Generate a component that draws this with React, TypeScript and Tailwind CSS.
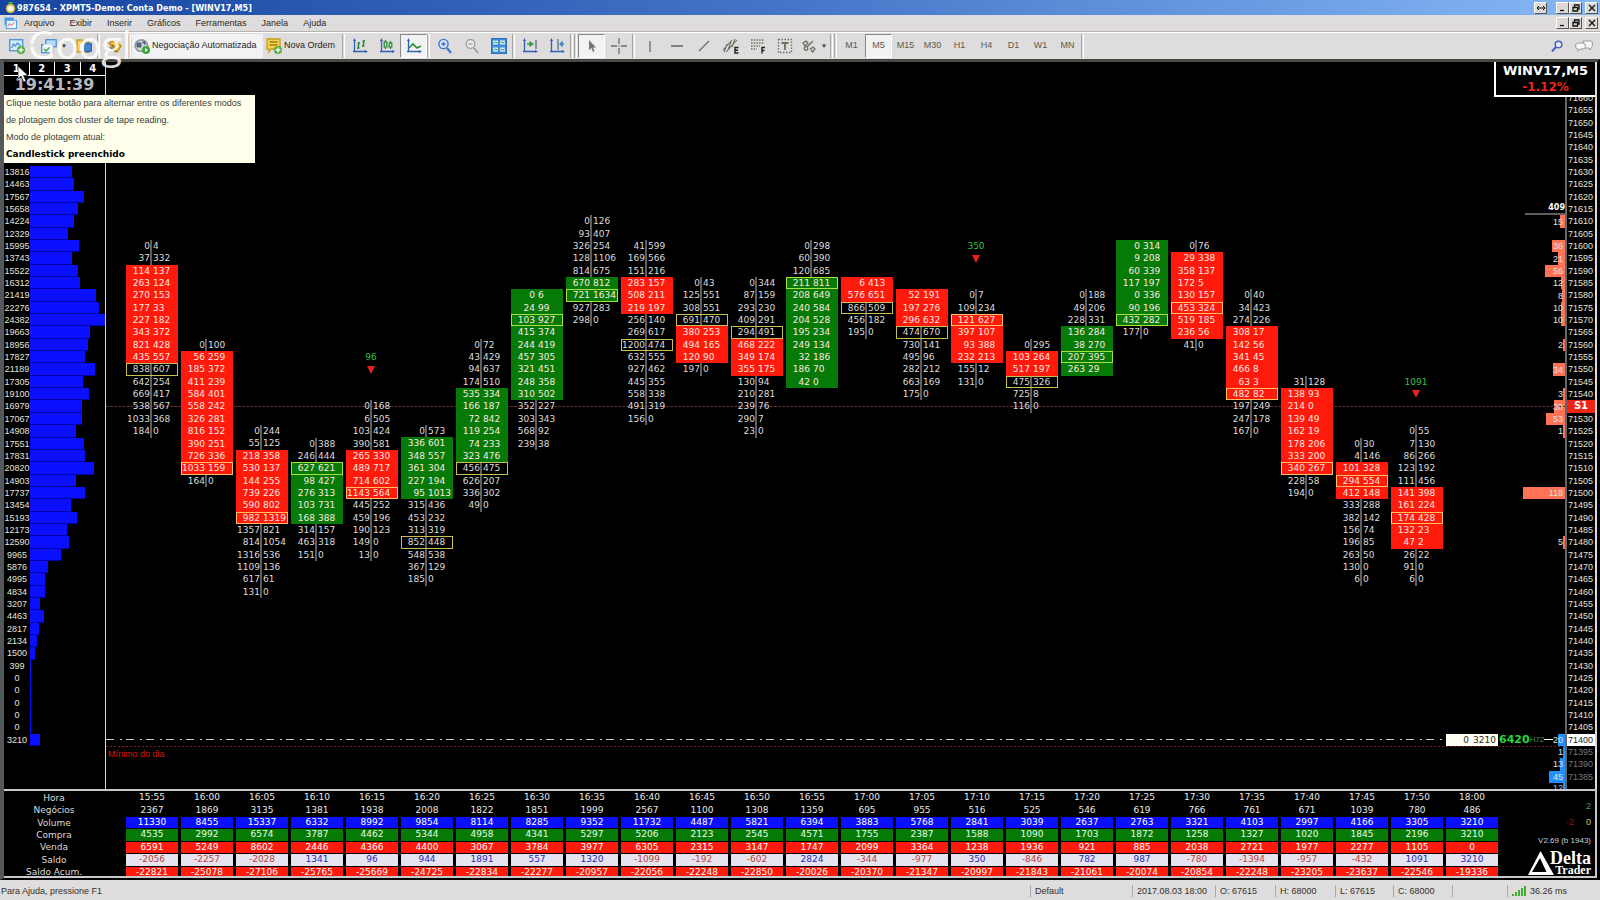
import React from 'react';

type Pair = [number, number];

interface Cluster {
  time: string;
  top?: number;
  cells: Pair[];
  body?: [number, number];
  poc?: number;
  up?: boolean;
  signal?: { value: number; price: number };
  stats: number[];
}

const TOP_PRICE = 71660;
const STEP = 5;
const ROWS = 56;

const rowOf = (price: number) => (TOP_PRICE - price) / STEP + 1;

const GRID = 'grid min-h-0 flex-1 grid-rows-[repeat(56,minmax(0,1fr))]';

// stats: negócios, volume, compra, venda, saldo, saldo acumulado
const clusters: Cluster[] = [
  { time: '15:55', top: 71600, body: [2, 9], poc: 10, cells: [[0, 4], [37, 332], [114, 137], [263, 124], [270, 153], [177, 33], [227, 182], [343, 372], [821, 428], [435, 557], [838, 607], [642, 254], [669, 417], [538, 567], [1033, 368], [184, 0]], stats: [2367, 11330, 4535, 6591, -2056, -22821] },
  { time: '16:00', top: 71560, body: [1, 10], poc: 10, cells: [[0, 100], [56, 259], [185, 372], [411, 239], [584, 401], [558, 242], [326, 281], [816, 152], [390, 251], [726, 336], [1033, 159], [164, 0]], stats: [1869, 8455, 2992, 5249, -2257, -25078] },
  { time: '16:05', top: 71525, body: [2, 7], poc: 7, cells: [[0, 244], [55, 125], [218, 358], [530, 137], [144, 255], [739, 226], [590, 802], [982, 1319], [1357, 821], [814, 1054], [1316, 536], [1109, 136], [617, 61], [131, 0]], stats: [3135, 15337, 6574, 8602, -2028, -27106] },
  { time: '16:10', top: 71520, body: [2, 6], poc: 2, up: true, cells: [[0, 388], [246, 444], [627, 621], [98, 427], [276, 313], [103, 731], [168, 388], [314, 157], [463, 318], [151, 0]], stats: [1381, 6332, 3787, 2446, 1341, -25765] },
  { time: '16:15', top: 71535, body: [4, 7], poc: 7, signal: { value: 96, price: 71555 }, cells: [[0, 168], [6, 505], [103, 424], [390, 581], [265, 330], [489, 717], [714, 602], [1143, 564], [445, 252], [459, 196], [190, 123], [149, 0], [13, 0]], stats: [1938, 8992, 4462, 4366, 96, -25669] },
  { time: '16:20', top: 71525, body: [1, 5], poc: 9, up: true, cells: [[0, 573], [336, 601], [348, 557], [361, 304], [227, 194], [95, 1013], [315, 436], [453, 232], [313, 319], [852, 448], [548, 538], [367, 129], [185, 0]], stats: [2008, 9854, 5344, 4400, 944, -24725] },
  { time: '16:25', top: 71560, body: [4, 9], poc: 10, up: true, cells: [[0, 72], [43, 429], [94, 637], [174, 510], [535, 334], [166, 187], [72, 842], [119, 254], [74, 233], [323, 476], [456, 475], [626, 207], [336, 302], [49, 0]], stats: [1822, 8114, 4958, 3067, 1891, -22834] },
  { time: '16:30', top: 71580, body: [0, 8], poc: 2, up: true, cells: [[0, 6], [24, 99], [103, 927], [415, 374], [244, 419], [457, 305], [321, 451], [248, 358], [310, 502], [352, 227], [303, 343], [568, 92], [239, 38]], stats: [1851, 8285, 4341, 3784, 557, -22277] },
  { time: '16:35', top: 71610, body: [5, 6], poc: 6, up: true, cells: [[0, 126], [93, 407], [326, 254], [128, 1106], [814, 675], [670, 812], [721, 1634], [927, 283], [298, 0]], stats: [1999, 9352, 5297, 3977, 1320, -20957] },
  { time: '16:40', top: 71600, body: [3, 5], poc: 8, cells: [[41, 599], [169, 566], [151, 216], [283, 157], [508, 211], [219, 197], [256, 140], [269, 617], [1200, 474], [632, 555], [927, 462], [445, 355], [558, 338], [491, 319], [156, 0]], stats: [2567, 11732, 5206, 6305, -1099, -22056] },
  { time: '16:45', top: 71585, body: [4, 6], poc: 3, cells: [[0, 43], [125, 551], [308, 551], [691, 470], [380, 253], [494, 165], [120, 90], [197, 0]], stats: [1100, 4487, 2123, 2315, -192, -22248] },
  { time: '16:50', top: 71585, body: [5, 7], poc: 4, cells: [[0, 344], [87, 159], [293, 230], [409, 291], [294, 491], [468, 222], [349, 174], [355, 175], [130, 94], [210, 281], [239, 76], [290, 7], [23, 0]], stats: [1308, 5821, 2545, 3147, -602, -22850] },
  { time: '16:55', top: 71600, body: [3, 11], poc: 3, up: true, cells: [[0, 298], [60, 390], [120, 685], [211, 811], [208, 649], [240, 584], [204, 528], [195, 234], [249, 134], [32, 186], [186, 70], [42, 0]], stats: [1359, 6394, 4571, 1747, 2824, -20026] },
  { time: '17:00', top: 71585, body: [0, 1], poc: 2, cells: [[6, 413], [576, 651], [866, 509], [456, 182], [195, 0]], stats: [695, 3883, 1755, 2099, -344, -20370] },
  { time: '17:05', top: 71580, body: [0, 2], poc: 3, cells: [[52, 191], [197, 276], [296, 632], [474, 670], [730, 141], [495, 96], [282, 212], [663, 169], [175, 0]], stats: [955, 5768, 2387, 3364, -977, -21347] },
  { time: '17:10', top: 71580, body: [2, 5], poc: 2, signal: { value: 350, price: 71600 }, cells: [[0, 7], [109, 234], [121, 627], [397, 107], [93, 388], [232, 213], [155, 12], [131, 0]], stats: [516, 2841, 1588, 1238, 350, -20997] },
  { time: '17:15', top: 71560, body: [1, 2], poc: 3, cells: [[0, 295], [103, 264], [517, 197], [475, 326], [725, 8], [116, 0]], stats: [525, 3039, 1090, 1936, -846, -21843] },
  { time: '17:20', top: 71580, body: [3, 6], poc: 5, up: true, cells: [[0, 188], [49, 206], [228, 331], [136, 284], [38, 270], [207, 395], [263, 29]], stats: [546, 2637, 1703, 921, 782, -21061] },
  { time: '17:25', top: 71600, body: [0, 6], poc: 6, up: true, cells: [[0, 314], [9, 208], [60, 339], [117, 197], [0, 336], [90, 196], [432, 282], [177, 0]], stats: [619, 2763, 1872, 885, 987, -20074] },
  { time: '17:30', top: 71600, body: [1, 7], poc: 5, cells: [[0, 76], [29, 338], [358, 137], [172, 5], [130, 157], [453, 324], [519, 185], [236, 56], [41, 0]], stats: [766, 3321, 1258, 2038, -780, -20854] },
  { time: '17:35', top: 71580, body: [3, 8], poc: 8, cells: [[0, 40], [34, 423], [274, 226], [308, 17], [142, 56], [341, 45], [466, 8], [63, 3], [482, 82], [197, 249], [247, 178], [167, 0]], stats: [761, 4103, 1327, 2721, -1394, -22248] },
  { time: '17:40', top: 71545, body: [1, 7], poc: 7, cells: [[31, 128], [138, 93], [214, 0], [139, 49], [162, 19], [178, 206], [333, 200], [340, 267], [228, 58], [194, 0]], stats: [671, 2997, 1020, 1977, -957, -23205] },
  { time: '17:45', top: 71520, body: [2, 4], poc: 3, cells: [[0, 30], [4, 146], [101, 328], [294, 554], [412, 148], [333, 288], [382, 142], [156, 74], [196, 85], [263, 50], [130, 0], [6, 0]], stats: [1039, 4166, 1845, 2277, -432, -23637] },
  { time: '17:50', top: 71525, body: [5, 9], poc: 7, signal: { value: 1091, price: 71545 }, cells: [[0, 55], [7, 130], [86, 266], [123, 192], [111, 456], [141, 398], [161, 224], [174, 428], [132, 23], [47, 2], [26, 22], [91, 0], [6, 0]], stats: [780, 3305, 2196, 1105, 1091, -22546] },
  { time: '18:00', cells: [], stats: [486, 3210, 3210, 0, 3210, -19336] },
];

const PROFILE_TOP = 71630;
const profile = [
  13816, 14463, 17567, 15658, 14224, 12329, 15995, 13743, 15522, 16312, 21419, 22276, 24382, 19663, 18956, 17827,
  21189, 17305, 19100, 16979, 17067, 14908, 17551, 17831, 20820, 14903, 17737, 13454, 15193, 12173, 12590, 9965,
  5876, 4995, 4834, 3207, 4463, 2817, 2134, 1500, 399, 0, 0, 0, 0, 0, 3210,
];

const book: { price: number; qty: number; bid?: boolean }[] = [
  { price: 71610, qty: 15 },
  { price: 71600, qty: 36 },
  { price: 71595, qty: 21 },
  { price: 71590, qty: 56 },
  { price: 71585, qty: 12 },
  { price: 71580, qty: 8 },
  { price: 71575, qty: 10 },
  { price: 71570, qty: 10 },
  { price: 71560, qty: 2 },
  { price: 71550, qty: 34 },
  { price: 71540, qty: 3 },
  { price: 71535, qty: 30 },
  { price: 71530, qty: 53 },
  { price: 71525, qty: 1 },
  { price: 71500, qty: 118 },
  { price: 71480, qty: 5 },
  { price: 71400, qty: 20, bid: true },
  { price: 71395, qty: 1, bid: true },
  { price: 71390, qty: 13, bid: true },
  { price: 71385, qty: 45, bid: true },
];

const statRows = [
  { label: 'Negócios', cls: 'text-[#e8e8e8]' },
  { label: 'Volume', cls: 'bg-[#0a10ff] text-white' },
  { label: 'Compra', cls: 'bg-[#067a06] text-[#e6ffe6]' },
  { label: 'Venda', cls: 'bg-[#ff1a0c] text-white' },
  { label: 'Saldo', cls: 'bg-[#e6e4ee]' },
  { label: 'Saldo Acum.', cls: 'bg-[#ff1a0c] text-white' },
];

const menus = ['Arquivo', 'Exibir', 'Inserir', 'Gráficos', 'Ferramentas', 'Janela', 'Ajuda'];
const timeframes = ['M1', 'M5', 'M15', 'M30', 'H1', 'H4', 'D1', 'W1', 'MN'];

const Svg: React.FC<{ children: React.ReactNode }> = ({ children }) => (
  <svg className="h-4 w-4 shrink-0" viewBox="0 0 16 16" fill="none" stroke="#6d6d60" strokeWidth="1.3">
    {children}
  </svg>
);

const Axes = () => (
  <>
    <path d="M2.5 2v12M1 13.5h13" stroke="#2f62b5" />
    <path d="M2.5 0L1 3h3zM16 13.5L13 12v3z" fill="#2f62b5" stroke="none" />
  </>
);

const icons = {
  newChart: (
    <Svg>
      <rect x="0.7" y="1.7" width="13" height="11" fill="#d5ecfa" stroke="#4a93d4" />
      <path d="M2.5 10l2-4 2 2 2-3 3 3" stroke="#4a93d4" />
      <circle cx="12" cy="12" r="4" fill="#4fae3c" stroke="none" />
      <path d="M12 9.5v5M9.5 12h5" stroke="#fff" strokeWidth="1.5" />
    </Svg>
  ),
  profiles: (
    <Svg>
      <rect x="4.7" y="1.7" width="10.5" height="7" fill="#b6dcf6" stroke="#4a93d4" />
      <rect x="0.7" y="6.7" width="11" height="8" fill="#e6f4fc" stroke="#4a93d4" />
      <path d="M3 11l2 2 4-4" stroke="#3b9c3a" />
    </Svg>
  ),
  market: (
    <Svg>
      <path d="M1 2h5l1 2h6v10H1z" fill="#f4d469" stroke="#c89a2a" />
      <rect x="8.5" y="5.5" width="7" height="8" rx="1" fill="#3f86d8" stroke="#2767b4" />
      <path d="M5 6v6" stroke="#fff" strokeWidth="2" />
    </Svg>
  ),
  tester: (
    <Svg>
      <path d="M2 5l6-3 6 6-4 6z" fill="#f0be3a" stroke="#b88412" />
      <path d="M5 7l5 4M3 9l6 5" stroke="#8a6410" />
    </Svg>
  ),
  robot: (
    <Svg>
      <path d="M1 9Q1 3 6 2h3q4 1 5 6l-3 5H4z" fill="#d4d6da" stroke="#8c8f96" />
      <path d="M3 5h4v4H3zM8 4h3v3" fill="#5a6a8c" stroke="#4a5a7c" strokeWidth="1" />
      <circle cx="12" cy="12" r="4" fill="#3da53a" stroke="none" />
      <path d="M11 10l3 2-3 2z" fill="#fff" stroke="none" />
    </Svg>
  ),
  order: (
    <Svg>
      <path d="M1 1h13v10H5l-2 3v-3H1z" fill="#f7d24f" stroke="#c79c22" />
      <path d="M3.5 4h8M3.5 7h8" stroke="#a27c14" />
      <circle cx="12" cy="12" r="4" fill="#4fae3c" stroke="none" />
      <path d="M12 9.5v5M9.5 12h5" stroke="#fff" strokeWidth="1.5" />
    </Svg>
  ),
  bars: (
    <Svg>
      <Axes />
      <path d="M6.5 4v7M5 10h1.5M6.5 5H8M11.5 2v7M10 8h1.5M11.5 3H13" stroke="#2f8c3a" strokeWidth="1.6" />
    </Svg>
  ),
  candles: (
    <Svg>
      <Axes />
      <path d="M6.5 2v9M11.5 3v8" stroke="#2f8c3a" />
      <rect x="5.2" y="4" width="2.6" height="5" fill="#e4f4e0" stroke="#2f8c3a" />
      <rect x="10.2" y="5" width="2.6" height="4" fill="#e4f4e0" stroke="#2f8c3a" />
    </Svg>
  ),
  line: (
    <Svg>
      <Axes />
      <path d="M3 10l4-4 4 4 4-2" stroke="#2f8c3a" strokeWidth="1.6" />
    </Svg>
  ),
  zoomIn: (
    <Svg>
      <circle cx="6.5" cy="6" r="4.6" fill="#cfe2fa" stroke="#3e74cf" strokeWidth="1.4" />
      <path d="M4.5 6h4M6.5 4v4" stroke="#3e74cf" />
      <path d="M10 10l4 5" stroke="#3e74cf" strokeWidth="2.2" />
    </Svg>
  ),
  zoomOut: (
    <Svg>
      <circle cx="6.5" cy="6" r="4.3" fill="#ececec" stroke="#9a9a9a" />
      <path d="M4.5 6h4" stroke="#9a9a9a" />
      <path d="M10 10l4 5" stroke="#9a9a9a" strokeWidth="1.8" />
    </Svg>
  ),
  tile: (
    <Svg>
      <rect x="0.5" y="0.5" width="15" height="15" fill="#3f8fd8" stroke="#2a70b8" />
      <path d="M2 2.5h5v4H2zM9 2.5h5v4H9zM2 9.5h5v4H2zM9 9.5h5v4H9z" fill="#d5ecfa" stroke="none" />
      <path d="M2.5 5l2-1 2 1M9.5 4l2 1 2-1M2.5 12l2-1 2 1M9.5 11l2 1 2-1" stroke="#3b9c3a" strokeWidth="1" />
    </Svg>
  ),
  scroll: (
    <Svg>
      <Axes />
      <path d="M14 2v9" stroke="#5a6a8c" />
      <path d="M5 6h4M8 4l3 2-3 2z" stroke="#3b9c3a" fill="#3b9c3a" />
    </Svg>
  ),
  shift: (
    <Svg>
      <Axes />
      <path d="M9 1v11" stroke="#5a6a8c" />
      <path d="M15 6h-3M13 4l-2 2 2 2z" stroke="#3e84cf" fill="#3e84cf" />
    </Svg>
  ),
  cursor: (
    <Svg>
      <path d="M5 2v10l2.5-2 1.5 4 1.5-.6L9 9.5h3z" fill="#77776c" stroke="none" />
    </Svg>
  ),
  cross: (
    <Svg>
      <path d="M8 0v6M8 10v6M0 8h6M10 8h6M7.5 8h1" />
    </Svg>
  ),
  vline: (
    <Svg>
      <path d="M8 3v11" />
    </Svg>
  ),
  hline: (
    <Svg>
      <path d="M2 8h12" strokeWidth="1.6" />
    </Svg>
  ),
  trend: (
    <Svg>
      <path d="M3 13L13 3" />
    </Svg>
  ),
  channel: (
    <Svg>
      <path d="M0 12L9 2M3 14L14 2M1 14l3-8M5 12l3-8M9 9l3-8" strokeWidth="1.1" />
      <path d="M15.5 9.5H12V15h3.5M12 12.3h3" stroke="#222" strokeWidth="1.4" />
    </Svg>
  ),
  fibo: (
    <Svg>
      <path d="M1 2h13M1 5h13M1 8h9M1 11h6" strokeDasharray="1.5 1.2" />
      <path d="M15 9.5h-3v6M12 12.5h2.5" stroke="#222" strokeWidth="1.4" />
    </Svg>
  ),
  text: (
    <Svg>
      <rect x="1.5" y="1.5" width="13" height="13" strokeDasharray="1.5 1.5" />
      <path d="M4.5 5h7M8 5v7" strokeWidth="1.8" />
    </Svg>
  ),
  shapes: (
    <Svg>
      <path d="M2 5l3-2 2 2-3 3zM6 9l6-6" />
      <circle cx="5" cy="10.5" r="1.8" />
      <path d="M9.5 11l2.5-2 2 2-2.5 3z" />
    </Svg>
  ),
};

const Caret = () => <span className="text-[6px] text-[#333]">▼</span>;

const Sep = () => <div className="mr-px h-6 w-[3px] shrink-0 border-l border-r border-l-[#a8a6a4] border-r-white" />;

interface ToolProps {
  icon: keyof typeof icons;
  label: string;
  caret?: boolean;
  pressed?: boolean;
}

const Tool: React.FC<ToolProps> = ({ icon, label, caret, pressed }) => (
  <button
    aria-label={label}
    className={`flex h-6 shrink-0 items-center justify-center ${caret ? 'w-8 gap-1' : 'w-[27px]'} ${pressed ? 'border border-t-[#8a8886] border-l-[#8a8886] border-r-white border-b-white bg-[#f2f1f4]' : ''}`}
  >
    {icons[icon]}
    {caret && <Caret />}
  </button>
);

const WinButton: React.FC<{ label: string; children: React.ReactNode }> = ({ label, children }) => (
  <button
    aria-label={label}
    className="flex h-3 w-[13px] items-center justify-center border border-t-white border-l-white border-r-[#555] border-b-[#555] bg-[#dcd9d4]"
  >
    <svg className="h-2 w-2" viewBox="0 0 8 8" fill="none" stroke="#111" strokeWidth="1.3">
      {children}
    </svg>
  </button>
);

const WinControls = () => (
  <div className="flex">
    <WinButton label="Minimizar">
      <path d="M1 6.5h4" />
    </WinButton>
    <WinButton label="Restaurar">
      <path d="M2.5 3V1H7v4H5.5M1 3.5h4.5V7H1z" />
    </WinButton>
    <div className="ml-[3px]">
      <WinButton label="Fechar">
        <path d="M1 1l6 6M7 1L1 7" />
      </WinButton>
    </div>
  </div>
);

const TitleBar = () => (
  <header className="flex h-[15px] shrink-0 items-center bg-linear-to-r from-[#1545a0] via-[#4676c8] to-[#86b8f6] pr-[2px] pl-1">
    <svg className="h-[13px] w-[13px]" viewBox="0 0 14 14">
      <circle cx="7" cy="8" r="5" fill="#e9c64a" />
      <circle cx="7" cy="8" r="3" fill="#f6f6f0" />
      <path d="M4 1l3 3 3-3z" fill="#4fae3c" />
    </svg>
    <h1 className="flex-1 font-['DejaVu_Sans_Condensed','DejaVu_Sans',sans-serif] text-[9px] leading-3 font-bold text-white">
      987654 - XPMT5-Demo: Conta Demo - [WINV17,M5]
    </h1>
    <div className="mr-[9px]">
      <WinButton label="Expandir">
        <path d="M0 4h8M2 2L0 4l2 2M6 2l2 2-2 2" strokeWidth="1" />
      </WinButton>
    </div>
    <WinControls />
  </header>
);

const MenuBar = () => (
  <nav className="flex h-[17px] shrink-0 items-center border-b border-[#b5b2b0] bg-[#dedcdc] pr-[2px] pl-1">
    <svg className="mr-[7px] h-[13px] w-[13px]" viewBox="0 0 14 14">
      <rect x="0.5" y="0.5" width="10" height="8" fill="#4c9be6" />
      <rect x="2.5" y="3.5" width="11" height="9" fill="#eaf5fd" stroke="#4c9be6" />
      <path d="M4 10l2-3 2 2 3-3" fill="none" stroke="#d6504a" />
    </svg>
    <div className="flex flex-1 gap-[15px]">
      {menus.map(m => (
        <button key={m} className="text-[9px] leading-3 text-[#2c2a20]">
          {m}
        </button>
      ))}
    </div>
    <WinControls />
  </nav>
);

const Toolbar = () => (
  <div className="flex h-[27px] shrink-0 items-center border-t border-t-white bg-[#dedcdc] pl-[6px]">
    <Tool icon="newChart" label="Novo gráfico" caret />
    <Tool icon="profiles" label="Perfis" caret />
    <Tool icon="market" label="Observação de mercado" />
    <Sep />
    <Tool icon="tester" label="Testador" />
    <Sep />
    <button className="flex h-6 w-[131px] shrink-0 items-center gap-[2px] bg-[#f2f1f4] pl-[2px] text-[9px] text-[#26241c]">
      {icons.robot}
      Negociação Automatizada
    </button>
    <button className="flex h-6 w-[79px] shrink-0 items-center gap-[2px] pl-[3px] text-[9px] text-[#26241c]">
      {icons.order}
      Nova Ordem
    </button>
    <Sep />
    <Tool icon="bars" label="Barras" />
    <Tool icon="candles" label="Velas" />
    <Tool icon="line" label="Linha" pressed />
    <Sep />
    <Tool icon="zoomIn" label="Aproximar" />
    <Tool icon="zoomOut" label="Afastar" />
    <Tool icon="tile" label="Organizar janelas" />
    <Sep />
    <Tool icon="scroll" label="Rolagem automática" />
    <Tool icon="shift" label="Deslocar gráfico" />
    <Sep />
    <Sep />
    <Tool icon="cursor" label="Cursor" pressed />
    <Tool icon="cross" label="Mira" />
    <Sep />
    <Tool icon="vline" label="Linha vertical" />
    <Tool icon="hline" label="Linha horizontal" />
    <Tool icon="trend" label="Linha de tendência" />
    <Tool icon="channel" label="Canal equidistante" />
    <Tool icon="fibo" label="Fibonacci" />
    <Tool icon="text" label="Texto" />
    <Tool icon="shapes" label="Formas" caret />
    <Sep />
    <Sep />
    {timeframes.map(tf => (
      <button
        key={tf}
        className={`h-6 w-[27px] shrink-0 text-center text-[9px] text-[#5a584c] ${tf === 'M5' ? 'border border-t-[#8a8886] border-l-[#8a8886] border-r-white border-b-white bg-[#f2f1f4]' : ''}`}
      >
        {tf}
      </button>
    ))}
    <Sep />
    <div className="ml-auto flex items-center gap-3 pr-[7px]">
      <button aria-label="Pesquisar">
        <svg className="h-3 w-3" viewBox="0 0 12 12" fill="none" stroke="#4a62c8">
          <circle cx="7.5" cy="4.5" r="3.3" strokeWidth="1.5" fill="#e4eafc" />
          <path d="M5 7L1 11.5" strokeWidth="2" />
        </svg>
      </button>
      <button aria-label="Mensagens">
        <svg className="h-3 w-[18px]" viewBox="0 0 18 12" fill="#f7f7f7" stroke="#9c9a98">
          <path d="M8 1h8q1.5 0 1.5 3T16 8l-1 2-1-2H9z" />
          <path d="M3 3h5q2.5 0 2.5 3T8 9H5l-2 2.5V9Q.5 9 .5 6T3 3z" />
        </svg>
      </button>
    </div>
  </div>
);

const PROFILE_MAX = Math.max(...profile);

const VolumeProfile = () => (
  <aside className="flex w-[102px] shrink-0 flex-col border-r border-[#d8d8e4]">
    <div className="flex h-[14px] shrink-0 divide-x divide-white border-b border-white font-['DejaVu_Sans',sans-serif] text-[10px] leading-[13px] font-bold text-white">
      {[1, 2, 3, 4].map(n => (
        <button key={n} className="flex-1">
          {n}
        </button>
      ))}
    </div>
    <div className="h-4 shrink-0 text-center font-['DejaVu_Sans',sans-serif] text-base leading-[18px] font-bold text-[#b9b9bd]">
      19:41:39
    </div>
    <div className={GRID}>
      {profile.map((v, i) => (
        <div
          key={i}
          className="flex items-stretch"
          style={{ gridRow: rowOf(PROFILE_TOP - i * STEP) }}
        >
          <span className="w-[26px] text-center text-[9px] leading-3 text-[#e4e4d8]">
            {v}
          </span>
          <div className="flex-1">
            <div
              className="h-full min-w-px border-b border-[#0005a0] bg-[#0a10ff]"
              style={{ width: `${(v / PROFILE_MAX) * 100}%` }}
            />
          </div>
        </div>
      ))}
    </div>
    <div className="h-[6px] shrink-0" />
  </aside>
);

const ClusterColumn: React.FC<{ data: Cluster }> = ({ data }) => {
  const { top = 0, cells, body = [-1, -1], poc, up, signal } = data;
  const first = rowOf(top);

  if (!cells.length) {
    return (
      <div className={`${GRID} pr-[3px]`}>
        <div className="flex justify-end gap-1 bg-[#fffff4] pr-[2px] leading-3 text-[#2a2820]" style={{ gridRow: rowOf(71400) }}>
          <span>0</span>
          <span>3210</span>
        </div>
      </div>
    );
  }

  return (
    <div className={`${GRID} pr-[3px]`}>
      {signal && (
        <>
          <span className="col-start-1 pr-[2px] text-center leading-3 text-[#2fc040]" style={{ gridRow: rowOf(signal.price) }}>
            {signal.value}
          </span>
          <svg className="col-start-1 mr-[2px] h-2 w-2 self-center justify-self-center" viewBox="0 0 8 8" style={{ gridRow: rowOf(signal.price) + 1 }}>
            <path d="M0 0h8L4 8z" fill="#e8201c" />
          </svg>
        </>
      )}
      <div
        className="col-start-1 mr-[2px] w-[2px] justify-self-center bg-[#5e5e62]"
        style={{ gridRow: `${first} / span ${cells.length}` }}
      />
      <div
        className={`col-start-1 ${up ? 'bg-[#067a06]' : 'bg-[#ff1a0c]'}`}
        style={{ gridRow: `${first + body[0]} / ${first + body[1] + 1}` }}
      />
      {cells.map(([sell, buy], i) => {
        const inBody = i >= body[0] && i <= body[1];
        const pocColor = inBody ? (up ? 'border-[#a8e03c]' : 'border-[#ffc060]') : 'border-[#c8c050]';
        return (
          <div
            key={i}
            className={`col-start-1 flex border pr-[2px] leading-[10px] ${i === poc ? pocColor : 'border-transparent'} ${inBody ? 'text-[#ffe8e0]' : 'text-[#dcdcdc]'}`}
            style={{ gridRow: first + i }}
          >
            <span className="flex w-1/2 justify-end pr-[1px]">{sell}</span>
            <span className="w-1/2 pl-[2px]">{buy}</span>
          </div>
        );
      })}
    </div>
  );
};

const PriceLines = () => (
  <div className="absolute inset-0 flex flex-col">
    <div className="h-[30px] shrink-0" />
    <div className={GRID}>
      <svg className="h-px w-full self-center" style={{ gridRow: rowOf(71535) }}>
        <line x1="0" y1="0.5" x2="100%" y2="0.5" stroke="#5c3230" strokeDasharray="3 1" />
      </svg>
      <svg className="h-px w-full self-center pr-[120px]" style={{ gridRow: rowOf(71400) }}>
        <line x1="0" y1="0.5" x2="100%" y2="0.5" stroke="#c8c8c8" strokeDasharray="8 6 2 4" />
      </svg>
      <div className="flex flex-col" style={{ gridRow: `${rowOf(71395)} / span 2` }}>
        <svg className="h-px w-full shrink-0">
          <line x1="0" y1="0.5" x2="100%" y2="0.5" stroke="#7a1f1c" strokeDasharray="2 2" />
        </svg>
        <span className="pl-[2px] text-[9px] leading-[14px] text-[#d8160e]">Mínimo do dia</span>
      </div>
    </div>
    <div className="h-[6px] shrink-0" />
  </div>
);

const OrderBook = () => (
  <div className="flex w-16 shrink-0 flex-col">
    <div className="h-[30px] shrink-0" />
    <div className={`${GRID} text-[9px] text-[#e0e0e0]`}>
      <div className="flex flex-col items-end" style={{ gridRow: rowOf(71615) }}>
        <span className="font-['DejaVu_Sans',sans-serif] text-[8px] leading-[10px] font-bold text-white">409</span>
        <div className="h-[2px] w-10 bg-[#5e5e5e]" />
      </div>
      {book.map(({ price, qty, bid }) => (
        <div key={price} className="col-start-1 grid" style={{ gridRow: rowOf(price) }}>
          <div
            className={`col-start-1 row-start-1 min-w-[2px] justify-self-end ${bid ? 'bg-[#1e90ff]' : 'bg-[#ff7256]'}`}
            style={{ width: `${(qty / 180) * 100}%` }}
          />
          <div className="relative col-start-1 row-start-1 flex items-center justify-end pr-[2px] leading-3">
            {price === 71400 && (
              <div className="-ml-[2px] flex flex-1 items-center">
                <strong className="font-['DejaVu_Sans',sans-serif] text-[11px] text-[#22d83a]">6420</strong>
                <span className="text-[8px] text-[#5a8a50]">H72</span>
                <span className="h-px min-w-[3px] flex-1 bg-white" />
              </div>
            )}
            {qty}
          </div>
        </div>
      ))}
    </div>
    <div className="h-[6px] shrink-0 overflow-hidden border-r-2 border-[#1e90ff] text-right text-[9px] leading-[10px] text-[#9cc8f4]">
      12
    </div>
  </div>
);

const PriceScale = () => (
  <div className="flex w-[30px] shrink-0 flex-col border-l-2 border-[#66666a]">
    <div className="h-[30px] shrink-0" />
    <div className={`${GRID} text-[9px] leading-3`}>
      {Array.from({ length: ROWS }, (_, i) => TOP_PRICE - i * STEP).map(price => {
        if (price === 71535) {
          return (
            <div key={price} className="bg-[#f02414] text-center font-['DejaVu_Sans',sans-serif] text-[10px] font-bold text-white">
              S1
            </div>
          );
        }
        const tone = price === 71400 ? 'bg-white text-[#222]' : price < 71400 ? 'text-[#77777a]' : 'text-[#e4e4d8]';
        return (
          <div key={price} className={`pl-px ${tone}`}>
            {price}
          </div>
        );
      })}
    </div>
    <div className="h-[6px] shrink-0" />
  </div>
);

const SymbolBox = () => (
  <div className="absolute top-0 right-0 flex h-[35px] w-[101px] flex-col items-center border-b-2 border-l-2 border-white bg-black font-['DejaVu_Sans',sans-serif] font-bold">
    <span className="text-[13px] leading-[18px] text-white">WINV17,M5</span>
    <span className="text-xs leading-[14px] text-[#f02414]">-1.12%</span>
  </div>
);

const Tooltip = () => (
  <div
    role="tooltip"
    className="absolute top-[33px] left-0 w-[251px] bg-[#ffffec] px-[2px] text-[9px] leading-[17px] whitespace-nowrap text-[#3c3c34]"
  >
    <p>Clique neste botão para alternar entre os diferentes modos</p>
    <p>de plotagem dos cluster de tape reading.</p>
    <p>Modo de plotagem atual:</p>
    <p className="font-['DejaVu_Sans',sans-serif] font-bold text-black">Candlestick preenchido</p>
  </div>
);

const StatsTable = () => (
  <div className="h-[85px] shrink-0 overflow-hidden pt-px">
    <table className="h-[87px] w-full table-fixed border-separate border-spacing-0 text-center font-['DejaVu_Sans',sans-serif] text-[9px] leading-[11px]">
      <colgroup>
        <col className="w-[122px]" />
        {clusters.map(c => (
          <col key={c.time} />
        ))}
        <col className="w-[94px]" />
      </colgroup>
      <tbody>
        <tr>
          <th scope="row" className="p-0 pr-[22px] font-normal text-[#dcdcdc]">
            Hora
          </th>
          {clusters.map(c => (
            <td key={c.time} className="border-r-[3px] border-b border-black p-0 text-[#e8e8e8]">
              {c.time}
            </td>
          ))}
          <td rowSpan={7} className="p-0 pr-1 pb-1 align-bottom">
            <Brand />
          </td>
        </tr>
        {statRows.map((row, r) => (
          <tr key={row.label}>
            <th scope="row" className="p-0 pr-[22px] font-normal text-[#dcdcdc]">
              {row.label}
            </th>
            {clusters.map(c => {
              const v = c.stats[r];
              const tone = row.label === 'Saldo' ? (v < 0 ? 'text-[#c04038]' : 'text-[#2428c0]') : '';
              return (
                <td key={c.time} className={`border-r-[3px] border-b border-black p-0 ${row.cls} ${tone}`}>
                  {v}
                </td>
              );
            })}
          </tr>
        ))}
      </tbody>
    </table>
  </div>
);

const Brand = () => (
  <div className="flex flex-col items-end font-['Liberation_Sans',sans-serif] text-[9px] leading-4">
    <span className="text-[#3c9c58]">2</span>
    <span className="flex gap-3">
      <span className="text-[#8c1a18]">-2</span>
      <span className="text-[#c8c840]">0</span>
    </span>
    <span className="mt-[3px] mb-[2px] text-[8px] text-[#d0d0d0]">V2.69 (b 1943)</span>
    <div className="flex items-end">
      <svg className="h-6 w-[26px]" viewBox="0 0 26 24">
        <path d="M12.5 0L0 24h26zM12 7l6.5 14H4z" fill="#fff" fillRule="evenodd" />
      </svg>
      <div className="-ml-1 flex flex-col items-end font-['Liberation_Serif',serif] font-bold text-white">
        <span className="text-[18px] leading-[14px]">Delta</span>
        <span className="text-xs leading-[10px]">Trader</span>
      </div>
    </div>
  </div>
);

const StatusBar = () => (
  <footer className="flex h-5 shrink-0 items-center bg-[#dedcdc] pt-[2px] text-[9px] leading-3 whitespace-nowrap text-[#33312a]">
    <span className="flex-1 pl-[1px]">Para Ajuda, pressione F1</span>
    <span className="w-[102px] border-l border-[#aaa8a4] pl-1">Default</span>
    <span className="w-[83px] border-l border-[#aaa8a4] pl-1">2017.08.03 18:00</span>
    <span className="w-[60px] border-l border-[#aaa8a4] pl-1">O: 67615</span>
    <span className="w-[60px] border-l border-[#aaa8a4] pl-1">H: 68000</span>
    <span className="w-[58px] border-l border-[#aaa8a4] pl-1">L: 67615</span>
    <span className="w-[59px] border-l border-[#aaa8a4] pl-1">C: 68000</span>
    <span className="h-3 w-[55px] border-l border-[#aaa8a4]" />
    <span className="flex w-[93px] items-center gap-1 border-l border-[#aaa8a4] pl-1">
      <svg className="h-[10px] w-[14px]" viewBox="0 0 14 10" fill="#3fae34">
        <path d="M0 8h2v2H0zM3 6h2v4H3zM6 4h2v6H6zM9 2h2v8H9zM12 0h2v10h-2z" />
      </svg>
      36.26 ms
    </span>
  </footer>
);

const App: React.FC = () => {
  return (
    <div className="relative flex min-h-screen flex-col overflow-hidden bg-black font-['Liberation_Sans',Arial,sans-serif]">
      <TitleBar />
      <MenuBar />
      <Toolbar />
      <div className="flex min-h-0 flex-1 flex-col border-t-3 border-r-3 border-b-2 border-l-4 border-t-[#4a4a44] border-r-black border-b-black border-l-[#55585a]">
        <main className="relative flex min-h-[700px] flex-1 border-r-2 border-[#d8d8e4]">
          <VolumeProfile />
          <div className="relative flex min-w-0 flex-1">
            <PriceLines />
            <div className="relative flex min-w-0 flex-1 flex-col pl-5">
              <div className="h-[30px] shrink-0" />
              <div className="grid min-h-0 flex-1 grid-cols-[repeat(25,minmax(0,1fr))] font-['DejaVu_Sans',sans-serif] text-[9px]">
                {clusters.map(c => (
                  <ClusterColumn key={c.time} data={c} />
                ))}
              </div>
              <div className="h-[6px] shrink-0" />
            </div>
            <OrderBook />
          </div>
          <PriceScale />
          <SymbolBox />
          <Tooltip />
          <svg className="absolute top-1 left-[14px] h-4 w-[11px]" viewBox="0 0 11 16">
            <path d="M0 0v13l3-3 2.5 6 2.5-1-2.5-5.5H10z" fill="#fff" stroke="#222" strokeWidth="0.8" />
          </svg>
        </main>
        <div className="shrink-0 border-y-2 border-r-2 border-[#c8c8cc]">
          <StatsTable />
        </div>
      </div>
      <StatusBar />
      {/* recorder watermark */}
      <div className="pointer-events-none absolute top-6 left-7 font-['Open_Sans',sans-serif] text-[38px] leading-10 text-white/85">
        Googl
      </div>
    </div>
  );
};

export default App;
